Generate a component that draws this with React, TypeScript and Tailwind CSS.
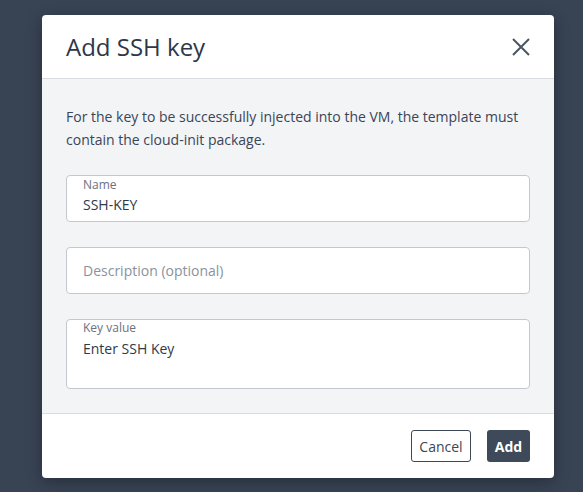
const font = { fontFamily: '"Open Sans", "Noto Sans", sans-serif' };

function CloseIcon() {
  return (
    <svg width="18" height="18" viewBox="0 0 18 18" fill="none" stroke="#4a5565" strokeWidth="2">
      <path d="M1 1L17 17M17 1L1 17" />
    </svg>
  );
}

function Field({ label, value }: { label: string; value: string }) {
  return (
    <div className="h-[47px] rounded-[4px] border border-[#c3c8cf] bg-white px-4 pt-px">
      <div className="text-[12px] leading-4 text-[#6b7280]">{label}</div>
      <div className="mt-[2px] text-[14px] leading-5 text-[#2f3a48]">{value}</div>
    </div>
  );
}

export default function App() {
  return (
    <div className="min-h-[492px] bg-[#384354] pt-[15px] pl-[42px]" style={font}>
      <div className="w-[512px] overflow-hidden rounded-[4px] bg-white shadow-[0_4px_16px_rgba(0,0,0,0.3)]">
        <div className="flex h-[64px] items-center justify-between border-b border-[#d8dce2] px-6">
          <h2 className="text-[24px] leading-8 text-[#2d3748]">Add SSH key</h2>
          <CloseIcon />
        </div>

        <div className="flex flex-col gap-6 bg-[#f3f4f6] px-6 pt-[26px] pb-6">
          <p className="text-[14px] leading-[23px] text-[#3a4556]">
            For the key to be successfully injected into the VM, the template must contain the
            cloud-init package.
          </p>
          <div className="flex flex-col gap-[25px]">
            <Field label="Name" value="SSH-KEY" />
            <div className="flex h-[47px] items-center rounded-[4px] border border-[#c3c8cf] bg-white px-4">
              <span className="text-[14px] leading-5 text-[#8a929d]">Description (optional)</span>
            </div>
            <div className="h-[70px] rounded-[4px] border border-[#c3c8cf] bg-white px-4">
              <div className="text-[12px] leading-4 text-[#6b7280]">Key value</div>
              <div className="mt-[3px] text-[14px] leading-5 text-[#2f3a48]">Enter SSH Key</div>
            </div>
          </div>
        </div>

        <div className="flex h-[65px] items-center justify-end gap-4 border-t border-[#d8dce2] px-6">
          <button className="h-[32px] w-[60px] rounded-[3px] border border-[#3d4756] bg-white text-[14px] text-[#3d4756]">
            Cancel
          </button>
          <button className="h-[32px] w-[43px] rounded-[3px] bg-[#3e4a5a] text-[14px] font-bold text-white">
            Add
          </button>
        </div>
      </div>
    </div>
  );
}
